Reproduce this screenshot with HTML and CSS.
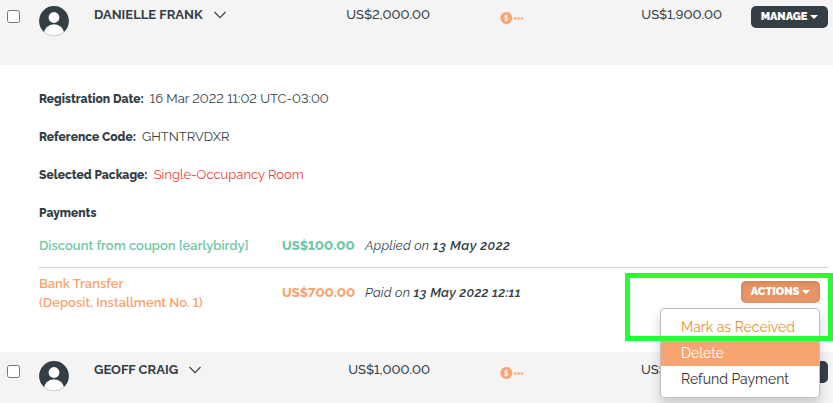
FILE: index.html
```html
<!DOCTYPE html>
<html lang="en">
<head>
<meta charset="utf-8">
<title>Registrations</title>
<link rel="stylesheet" href="styles.css">
</head>
<body>
<svg class="sprite" aria-hidden="true">
  <symbol id="avatar" viewBox="0 0 30 31">
    <clipPath id="disc"><circle cx="15" cy="15" r="14.9"/></clipPath>
    <circle cx="15" cy="15" r="14.9" fill="#343f45"/>
    <g clip-path="url(#disc)" fill="#fff">
      <circle cx="15" cy="11.5" r="5.4"/>
      <ellipse cx="15" cy="28" rx="10.3" ry="9.7"/>
    </g>
    <path d="M5.5 26.5a15 15 0 0 0 19 0" fill="none" stroke="#cfd2d3" stroke-width=".8"/>
  </symbol>
  <symbol id="chevron" viewBox="0 0 12 8"><path d="M.5 1 6 6.7 11.5 1" fill="none" stroke="#343f45" stroke-width="1.1"/></symbol>
  <symbol id="pending" viewBox="0 0 24 12">
    <circle cx="6.3" cy="6" r="6" fill="#f8a470"/>
    <path d="M8 4.4C7.6 3.8 7 3.6 6.2 3.6c-2.2 0-2.2 2.1 0 2.4 2.4.3 2.3 2.5 0 2.5-.9 0-1.6-.3-2-.9M6.2 2.5v7" fill="none" stroke="#fff" stroke-width="1"/>
    <path d="M14 6.5h2.5M17.4 6.5h2.5M20.8 6.5h2.5" stroke="#f8a470" stroke-width="2.2"/>
  </symbol>
</svg>

<main class="list">
  <section class="row">
    <input class="check" type="checkbox">
    <svg class="avatar"><use href="#avatar"/></svg>
    <div class="name"><span>DANIELLE FRANK</span><svg class="chevron"><use href="#chevron"/></svg></div>
    <span class="price">US$2,000.00</span>
    <svg class="pending"><use href="#pending"/></svg>
    <span class="price balance">US$1,900.00</span>
    <button class="btn manage">MANAGE<i class="caret"></i></button>
  </section>

  <section class="details">
    <p class="field"><b>Registration Date:</b><span>16 Mar 2022 11:02 UTC-03:00</span></p>
    <p class="field"><b>Reference Code:</b><span>GHTNTRVDXR</span></p>
    <p class="field"><b>Selected Package:</b><a class="package">Single-Occupancy Room</a></p>
    <h2 class="heading">Payments</h2>
    <div class="payment discount">
      <strong class="what">Discount from coupon [earlybirdy]</strong>
      <strong class="amount">US$100.00</strong>
      <em class="when">Applied on <b>13 May 2022</b></em>
    </div>
    <div class="payment transfer">
      <strong class="what">Bank Transfer<br>(Deposit, Installment No. 1)</strong>
      <strong class="amount">US$700.00</strong>
      <em class="when">Paid on <b>13 May 2022 12:11</b></em>
      <div class="dropdown">
        <button class="btn actions">ACTIONS<i class="caret"></i></button>
        <ul class="menu">
          <li class="mark">Mark as Received</li>
          <li class="delete">Delete</li>
          <li class="refund">Refund Payment</li>
        </ul>
        <div class="highlight"></div>
      </div>
    </div>
  </section>

  <section class="row">
    <input class="check" type="checkbox">
    <svg class="avatar"><use href="#avatar"/></svg>
    <div class="name"><span>GEOFF CRAIG</span><svg class="chevron"><use href="#chevron"/></svg></div>
    <span class="price">US$1,000.00</span>
    <svg class="pending"><use href="#pending"/></svg>
    <span class="price balance">US$</span>
    <button class="btn manage"></button>
  </section>
</main>
</body>
</html>
```
FILE: styles.css
```css
* { box-sizing: border-box; }
body {
  margin: 0;
  height: 403px;
  overflow: hidden;
  background: #fff;
  color: #343f45;
  font: 13px/19px Raleway, Lato, sans-serif;
  font-variant-numeric: lining-nums;
}
.sprite { position: absolute; width: 0; height: 0; }
.list { margin-top: -3px; }
.row {
  display: grid;
  grid-template-columns: 32px 55px 221px 115px 70px 52px 170px 29px 77px;
  align-items: start;
  height: 68px;
  padding: 8px 0 0 7px;
  background: #f4f4f4;
}
.check {
  appearance: none;
  width: 13px;
  height: 13px;
  margin: 5px 0 0;
  border: 1px solid #767676;
  border-radius: 2.5px;
  background: #fff;
}
.avatar { width: 30px; height: 31px; margin-top: 1px; }
.name { display: flex; align-items: center; gap: 11px; font-weight: 700; }
.chevron { width: 12px; height: 8px; }
.price { text-align: right; font-weight: 500; }
.pending { grid-column: 6; width: 24px; height: 12px; margin-top: 7px; }
.balance { grid-column: 7; }
.row:last-child .balance { text-align: left; padding-left: 89px; }
.btn {
  display: flex;
  align-items: center;
  justify-content: center;
  gap: 3px;
  height: 22px;
  padding: 0;
  border: 0;
  border-radius: 5px;
  color: #fff;
  font: 900 11px/22px Raleway, Lato, sans-serif;
}
.manage { grid-column: 9; width: 77px; margin-top: 1px; background: #343f45; }
.caret { border: 4px solid transparent; border-top-color: #fff; border-bottom: 0; }

.details { height: 287px; padding: 24px 5px 0 39px; }
.field { display: flex; gap: 6px; height: 19px; margin: 0 0 19px; }
.field b, .heading { font-weight: 800; font-size: 12px; line-height: 21px; }
.package { color: #f03c3c; }
.heading { height: 19px; margin: 0; }
.payment { display: grid; grid-template-columns: 243px 83px 1fr 87px; align-items: center; }
.discount { height: 46px; padding-top: 1px; border-bottom: 1px solid #cbd3d6; }
.transfer { height: 50px; }
.transfer .amount, .transfer .when { margin-top: -1px; }
.what { font-weight: 600; }
.amount { font-weight: 800; }
.when { letter-spacing: .15px; }
.when b { font-weight: 600; letter-spacing: .48px; }
.discount .what, .discount .amount { color: #72c6a5; }
.transfer .what, .transfer .amount { color: #f8a470; }
.dropdown { position: relative; align-self: start; width: 79px; margin-top: 13px; }
.transfer .when b { letter-spacing: .25px; }
.actions {
  width: 79px;
  background: #e69567;
  box-shadow: inset 0 2px 4px rgba(120, 60, 20, .2);
}
.menu {
  position: absolute;
  top: 27px;
  right: 0;
  width: 160px;
  height: 90px;
  margin: 0;
  padding: 5px 0;
  border: 1px solid #bfbfbf;
  border-radius: 4px;
  background: #fff;
  box-shadow: 0 6px 12px rgba(0, 0, 0, .175);
  list-style: none;
  color: #333;
  font-size: 14px;
  line-height: 26px;
}
.menu li { height: 26px; padding-left: 20px; }
.menu .mark { color: #e8922f; }
.menu .delete { background: #f8a470; color: #fff; }
.highlight {
  position: absolute;
  top: -8.5px;
  right: -13px;
  width: 208px;
  height: 68px;
  border: 5px solid #28fc35;
  pointer-events: none;
}
```
